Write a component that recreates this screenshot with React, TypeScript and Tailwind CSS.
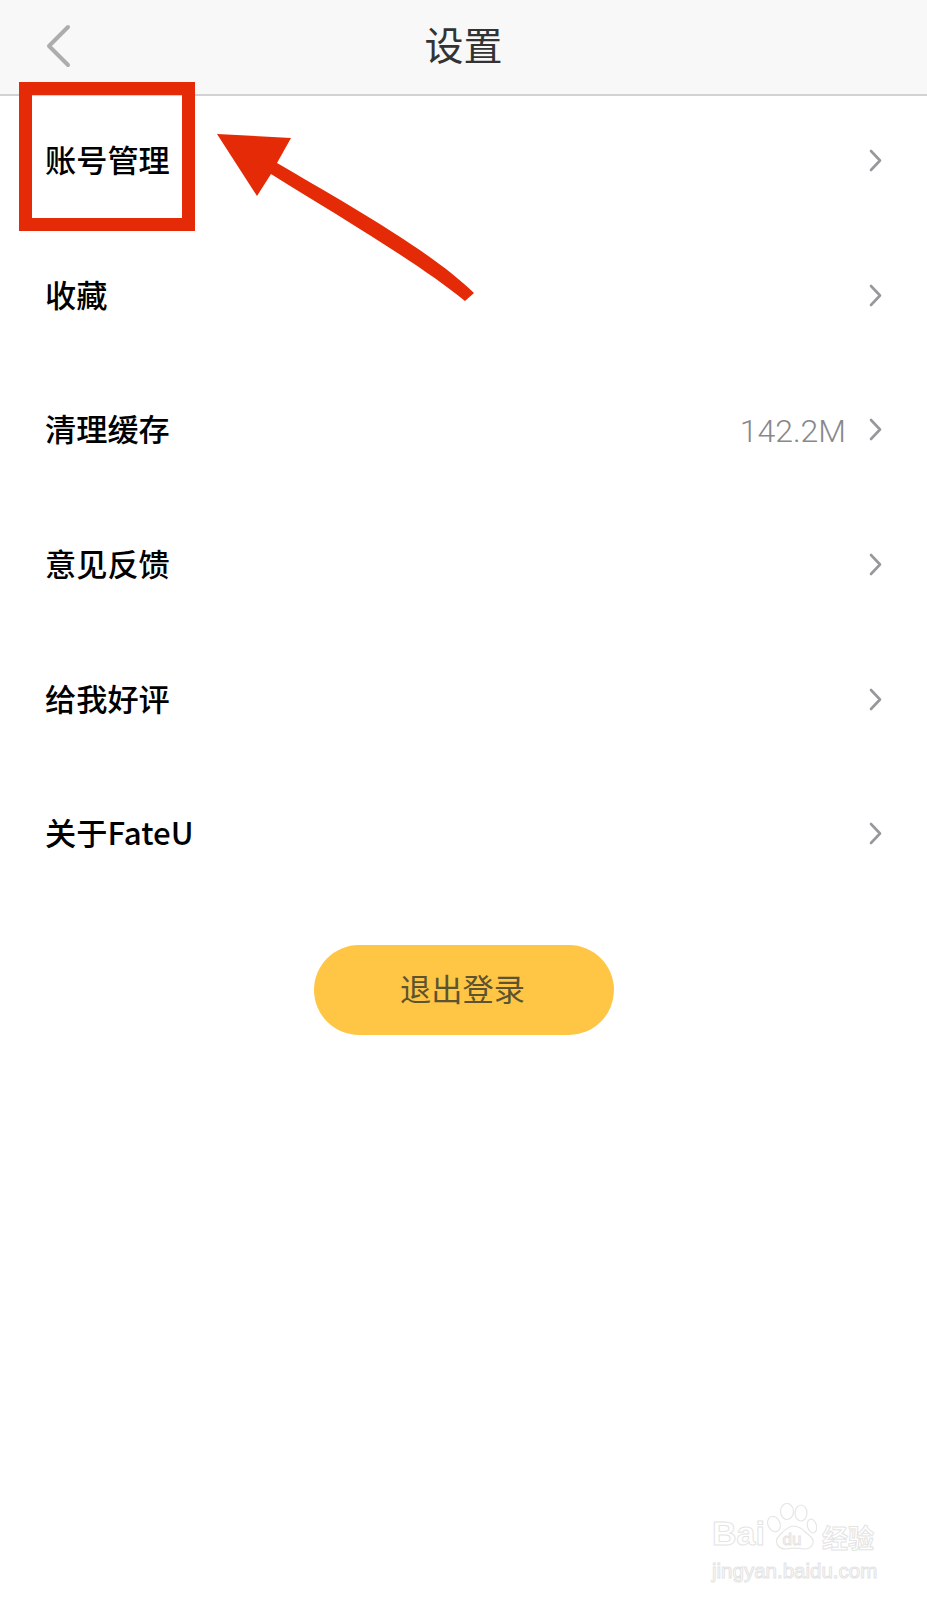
import React from "react";

const cjk = "font-['Noto_Sans_CJK_SC','Liberation_Sans',sans-serif]";

interface Row {
    label: string;
    value?: string;
}

const rows: Row[] = [
    { label: "账号管理" },
    { label: "收藏" },
    { label: "清理缓存", value: "142.2M" },
    { label: "意见反馈" },
    { label: "给我好评" },
    { label: "关于FateU" },
];

function Chevron() {
    return (
        <svg width="13" height="23" viewBox="0 0 13 23" fill="none" className="shrink-0">
            <path d="M2 2 L11 11.5 L2 21" stroke="#98989c" strokeWidth="2.6" strokeLinecap="round" strokeLinejoin="round" />
        </svg>
    );
}

// baidu jingyan watermark, bottom right
function Watermark() {
    const outline = "text-transparent [-webkit-text-stroke:1px_#e4e4e4]";
    return (
        <div className="absolute left-[712px] top-[1501px] flex flex-col w-[170px]">
            <div className="flex items-end h-[49px] whitespace-nowrap">
                <span className={`text-[34px] leading-[34px] font-bold font-['Liberation_Sans',sans-serif] ${outline}`}>Bai</span>
                <div className="relative w-[50px] h-[47px] ml-[2px] shrink-0 flex items-end justify-center">
                    <svg width="50" height="47" viewBox="0 0 50 47" fill="none" className="absolute inset-0">
                        <g stroke="#e6e6e6" strokeWidth="1.2">
                            <ellipse cx="7" cy="21" rx="6" ry="8" transform="rotate(-25 7 21)" />
                            <ellipse cx="20" cy="8.5" rx="6.5" ry="8" />
                            <ellipse cx="34" cy="10" rx="6" ry="8" />
                            <ellipse cx="45" cy="23" rx="4.5" ry="7" transform="rotate(-15 45 23)" />
                            <path d="M27 23 C20 23 16 29 12 33 C7 38 10 46 19 46 C24 45 32 45 37 46 C46 46 49 38 43 33 C38 29 34 23 27 23 Z" />
                        </g>
                    </svg>
                    <span className={`relative mb-[1px] text-[17px] leading-[18px] font-['Liberation_Sans',sans-serif] ${outline}`}>du</span>
                </div>
                <span className={`ml-[5px] mb-[-3px] text-[26px] leading-[32px] font-bold ${cjk} ${outline}`}>经验</span>
            </div>
            <span className={`mt-[9px] text-[20.5px] leading-[24px] whitespace-nowrap font-['Liberation_Sans',sans-serif] ${outline}`}>jingyan.baidu.com</span>
        </div>
    );
}

export default function App() {
    return (
        <div className={`relative w-[927px] h-[1600px] bg-white overflow-hidden ${cjk}`}>
            {/* Header */}
            <div className="grid grid-cols-[1fr_auto_1fr] items-center h-[96px] pl-[45px] pb-[4px] bg-[#f8f8f8] border-b-2 border-[#d2d2d2]">
                <svg width="28" height="44" viewBox="0 0 28 44" fill="none" className="mt-[2px]">
                    <path d="M23 3 L4 22 L23 41" stroke="#adadad" strokeWidth="4" strokeLinecap="round" strokeLinejoin="round" />
                </svg>
                <h1 className="text-[39px] leading-none text-[#333333] font-normal -ml-[45px] mb-[4px]">设置</h1>
            </div>

            {/* Rows */}
            <div className="flex flex-col">
                {rows.map((row) => (
                    <div key={row.label} className="flex items-center h-[134.7px] pl-[45px] pr-[45px] pb-[6px]">
                        <span className="text-[31.2px] font-medium text-black flex-1 mb-[2px]">{row.label}</span>
                        {row.value && (
                            <span className="text-[32px] font-light font-['Roboto',sans-serif] text-[#88888c] mr-[23px] mt-[2px]">{row.value}</span>
                        )}
                        <Chevron />
                    </div>
                ))}
            </div>

            {/* Logout */}
            <div className="flex justify-center mt-[41px]">
                <button className="w-[300px] h-[90px] pb-[4px] pr-[2px] rounded-full bg-[#fec644] text-[31.2px] text-[#5c5330]">退出登录</button>
            </div>

            {/* Annotation */}
            <div className="absolute left-[19px] top-[82px] w-[176px] h-[149px] border-[13px] border-[#e42a06]" />
            <svg width="927" height="400" viewBox="0 0 927 400" className="absolute left-0 top-0 pointer-events-none">
                <path
                    d="M217 134 L291 138 L277 163 C340 200 430 250 474 293 L465 301 C420 264 340 217 271 174 L257 196 Z"
                    fill="#e42a06"
                />
            </svg>

            <Watermark />
        </div>
    );
}
